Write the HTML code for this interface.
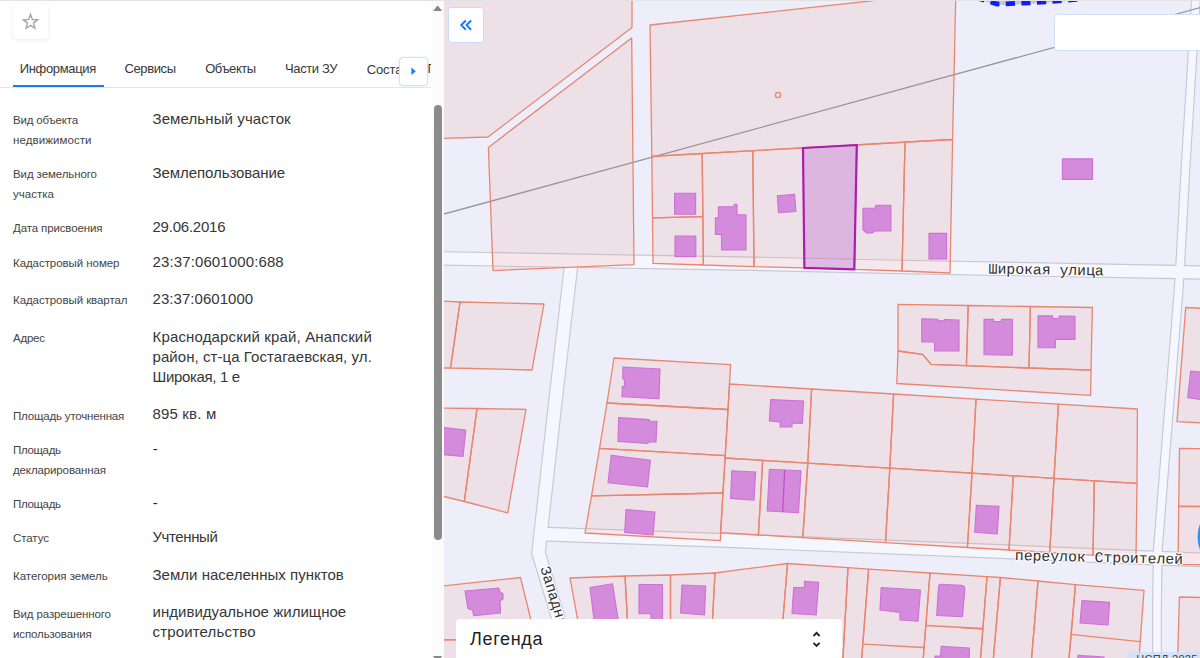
<!DOCTYPE html>
<html lang="ru"><head><meta charset="utf-8"><title>Карта</title>
<style>
html,body{margin:0;padding:0;}
body{width:1200px;height:658px;overflow:hidden;position:relative;background:#fff;font-family:"Liberation Sans",sans-serif;}
.t{position:absolute;white-space:pre;line-height:20px;}
.panel{position:absolute;left:0;top:0;width:431px;height:658px;background:#fff;overflow:hidden;}
.topline{position:absolute;left:0;top:0;width:1200px;height:1px;background:#e3e3e3;z-index:20;}
.star{position:absolute;left:13px;top:4px;width:35px;height:35px;border-radius:4px;background:#fff;box-shadow:0 1px 5px rgba(0,0,0,0.09);}
.tabline{position:absolute;left:0;top:87px;width:431px;height:1px;background:#e6e6e6;}
.tabact{position:absolute;left:13px;top:85px;width:90.5px;height:2px;background:#1a7cf0;}
.more{position:absolute;left:399px;top:57px;width:26.8px;height:26.8px;border:1px solid #cfe2fa;border-radius:4px;background:#fff;box-shadow:0 0 3px rgba(120,170,240,0.25);}
.sb{position:absolute;left:431px;top:0;width:13px;height:658px;background:#fbfbfb;}
.thumb{position:absolute;left:3px;top:105px;width:7.5px;height:435px;border-radius:4px;background:#8c8c8c;}
.map{position:absolute;left:444px;top:0;}
.btn{position:absolute;left:448.2px;top:7.1px;width:33.6px;height:33.6px;border:1px solid #c4dcfa;border-radius:3.5px;background:#fff;}
.search{position:absolute;left:1054.4px;top:14.1px;width:160px;height:34.8px;border:1px solid #cfe2fa;border-radius:4px;background:#fff;}
.legend{position:absolute;left:455.5px;top:619px;width:386px;height:50px;border-radius:4px 4px 0 0;background:#fff;}
.attr{position:absolute;left:1127px;top:652px;width:80px;height:10px;background:rgba(205,225,250,0.8);color:#444;font-size:11px;line-height:15px;letter-spacing:0.3px;white-space:pre;overflow:hidden;}
</style></head><body>
<div class="panel">
<div class="star"><svg width="35" height="35" viewBox="0 0 35 35"><path transform="translate(17.5,17.4) scale(0.9) translate(-17.5,-17.2)" d="M17.5,9.6 L19.6,15.1 L25.4,15.4 L20.9,19.1 L22.4,24.8 L17.5,21.6 L12.6,24.8 L14.1,19.1 L9.6,15.4 L15.4,15.1 Z" fill="none" stroke="#a6a6a6" stroke-width="1.55" stroke-linejoin="miter"/></svg></div>
<div class="tabline"></div><div class="tabact"></div>
<div class='t' style='left:19.70px;top:58.90px;font-size:13px;color:#383838;font-weight:400;letter-spacing:-0.333px'>Информация</div>
<div class='t' style='left:124.50px;top:58.90px;font-size:13px;color:#383838;font-weight:400;letter-spacing:-0.396px'>Сервисы</div>
<div class='t' style='left:205.20px;top:58.90px;font-size:13px;color:#383838;font-weight:400;letter-spacing:-0.438px'>Объекты</div>
<div class='t' style='left:285.10px;top:58.90px;font-size:13px;color:#383838;font-weight:400;letter-spacing:-0.398px'>Части ЗУ</div>
<div class='t' style='left:13.00px;top:110.32px;font-size:11.5px;color:#444444;font-weight:400;letter-spacing:-0.169px'>Вид объекта</div>
<div class='t' style='left:13.00px;top:130.32px;font-size:11.5px;color:#444444;font-weight:400;letter-spacing:0.081px'>недвижимости</div>
<div class='t' style='left:152.50px;top:109.00px;font-size:15px;color:#363636;font-weight:400;letter-spacing:0.105px'>Земельный участок</div>
<div class='t' style='left:13.00px;top:164.32px;font-size:11.5px;color:#444444;font-weight:400;letter-spacing:-0.096px'>Вид земельного</div>
<div class='t' style='left:13.00px;top:184.32px;font-size:11.5px;color:#444444;font-weight:400;letter-spacing:0.026px'>участка</div>
<div class='t' style='left:152.50px;top:163.00px;font-size:15px;color:#363636;font-weight:400;letter-spacing:-0.068px'>Землепользование</div>
<div class='t' style='left:13.00px;top:218.42px;font-size:11.5px;color:#444444;font-weight:400;letter-spacing:-0.124px'>Дата присвоения</div>
<div class='t' style='left:152.50px;top:216.90px;font-size:15px;color:#363636;font-weight:400;letter-spacing:-0.231px'>29.06.2016</div>
<div class='t' style='left:13.00px;top:253.02px;font-size:11.5px;color:#444444;font-weight:400;letter-spacing:-0.060px'>Кадастровый номер</div>
<div class='t' style='left:152.50px;top:251.50px;font-size:15px;color:#363636;font-weight:400;letter-spacing:0.119px'>23:37:0601000:688</div>
<div class='t' style='left:13.00px;top:290.42px;font-size:11.5px;color:#444444;font-weight:400;letter-spacing:-0.073px'>Кадастровый квартал</div>
<div class='t' style='left:152.50px;top:289.00px;font-size:15px;color:#363636;font-weight:400;letter-spacing:0.049px'>23:37:0601000</div>
<div class='t' style='left:13.00px;top:328.32px;font-size:11.5px;color:#444444;font-weight:400;letter-spacing:-0.234px'>Адрес</div>
<div class='t' style='left:152.50px;top:326.60px;font-size:15px;color:#363636;font-weight:400;letter-spacing:0.152px'>Краснодарский край, Анапский</div>
<div class='t' style='left:152.50px;top:346.60px;font-size:15px;color:#363636;font-weight:400;letter-spacing:0.063px'>район, ст-ца Гостагаевская, ул.</div>
<div class='t' style='left:152.50px;top:366.60px;font-size:15px;color:#363636;font-weight:400;letter-spacing:-0.333px'>Широкая, 1 е</div>
<div class='t' style='left:13.00px;top:406.02px;font-size:11.5px;color:#444444;font-weight:400;letter-spacing:-0.180px'>Площадь уточненная</div>
<div class='t' style='left:152.50px;top:404.20px;font-size:15px;color:#363636;font-weight:400;letter-spacing:0.166px'>895 кв. м</div>
<div class='t' style='left:13.00px;top:440.12px;font-size:11.5px;color:#444444;font-weight:400;letter-spacing:-0.344px'>Площадь</div>
<div class='t' style='left:13.00px;top:460.12px;font-size:11.5px;color:#444444;font-weight:400;letter-spacing:-0.121px'>декларированная</div>
<div class='t' style='left:13.00px;top:494.32px;font-size:11.5px;color:#444444;font-weight:400;letter-spacing:-0.344px'>Площадь</div>
<div class='t' style='left:13.00px;top:528.32px;font-size:11.5px;color:#444444;font-weight:400;letter-spacing:-0.072px'>Статус</div>
<div class='t' style='left:152.50px;top:526.60px;font-size:15px;color:#363636;font-weight:400;letter-spacing:-0.404px'>Учтенный</div>
<div class='t' style='left:13.00px;top:566.02px;font-size:11.5px;color:#444444;font-weight:400;letter-spacing:-0.028px'>Категория земель</div>
<div class='t' style='left:152.50px;top:564.60px;font-size:15px;color:#363636;font-weight:400;letter-spacing:0.024px'>Земли населенных пунктов</div>
<div class='t' style='left:13.00px;top:603.82px;font-size:11.5px;color:#444444;font-weight:400;letter-spacing:-0.120px'>Вид разрешенного</div>
<div class='t' style='left:13.00px;top:623.82px;font-size:11.5px;color:#444444;font-weight:400;letter-spacing:-0.123px'>использования</div>
<div class='t' style='left:152.50px;top:602.20px;font-size:15px;color:#363636;font-weight:400;letter-spacing:0.026px'>индивидуальное жилищное</div>
<div class='t' style='left:152.50px;top:622.20px;font-size:15px;color:#363636;font-weight:400;letter-spacing:0.161px'>строительство</div>
<div class="t" style="left:366.7px;top:59.5px;font-size:13px;color:#383838;letter-spacing:-0.1px;width:64px;overflow:hidden">Состав Г</div>
<div class="t" style="left:152.7px;top:439px;font-size:15px;color:#2b2b2b">-</div>
<div class="t" style="left:152.7px;top:493px;font-size:15px;color:#2b2b2b">-</div>
<div class="t" style="left:427.6px;top:59.3px;font-size:13px;color:#383838;width:3.4px;overflow:hidden">П</div>
<div class="more"><svg width="27" height="27" viewBox="-0.4 -0.3 27 27" style="position:absolute;left:0;top:0"><path d="M11,9.2 L15.4,13 L11,16.8 Z" fill="#1a7cf0"/></svg></div>
</div>
<div class="sb"><svg width="13" height="658" style="position:absolute;left:0;top:0"><path d="M2,11 L6.6,5.5 L11.2,11 Z" fill="#858585"/><path d="M2,656 L11.2,656 L6.6,661.5 Z" fill="#858585"/></svg><div class="thumb"></div></div>
<svg class="map" width="756" height="658" viewBox="444 0 756 658">
<rect x="440" y="-5" width="770" height="670" fill="#eeeefa"/>
<polyline points="440.0,258.4 740.0,263.5 900.0,266.9 1175.0,272.0 1205.0,272.6" fill="none" stroke="#c8c8d2" stroke-width="14.5" stroke-linejoin="round"/>
<polyline points="571.5,262.0 555.0,405.0 541.0,530.0 538.5,553.0 558.5,618.7 572.0,663.0" fill="none" stroke="#c8c8d2" stroke-width="14.6" stroke-linejoin="round"/>
<polyline points="541.0,534.0 740.0,541.0 1000.0,551.5 1153.0,558.0 1205.0,560.0" fill="none" stroke="#c8c8d2" stroke-width="14.8" stroke-linejoin="round"/>
<polyline points="1196.2,-5.0 1185.7,165.0 1180.2,265.0 1178.6,290.0 1165.3,455.0 1157.8,550.0 1157.0,605.0 1157.0,665.0" fill="none" stroke="#c8c8d2" stroke-width="9.9" stroke-linejoin="round"/>
<polyline points="440.0,258.4 740.0,263.5 900.0,266.9 1175.0,272.0 1205.0,272.6" fill="none" stroke="#f6f6fe" stroke-width="12.2" stroke-linejoin="round"/>
<polyline points="571.5,262.0 555.0,405.0 541.0,530.0 538.5,553.0 558.5,618.7 572.0,663.0" fill="none" stroke="#f6f6fe" stroke-width="12.3" stroke-linejoin="round"/>
<polyline points="541.0,534.0 740.0,541.0 1000.0,551.5 1153.0,558.0 1205.0,560.0" fill="none" stroke="#f6f6fe" stroke-width="12.5" stroke-linejoin="round"/>
<polyline points="1196.2,-5.0 1185.7,165.0 1180.2,265.0 1178.6,290.0 1165.3,455.0 1157.8,550.0 1157.0,605.0 1157.0,665.0" fill="none" stroke="#f6f6fe" stroke-width="7.6" stroke-linejoin="round"/>
<line x1="440" y1="215.1" x2="1205" y2="6.2" stroke="#96969e" stroke-width="1.3"/>
<path d="M972,-5 L997,2.5 Q1040,1.7 1096,-4" fill="none" stroke="#c6c6cc" stroke-width="5"/>
<path d="M972,-3.5 L997,4 Q1040,3.2 1096,-2.5" fill="none" stroke="#0f1cff" stroke-width="4.8" stroke-dasharray="9.2 6.4" stroke-dashoffset="11.8"/>
<g fill="rgba(242,128,100,0.125)" stroke="#e98670" stroke-width="1.3" stroke-linejoin="round">
<polygon points="440.0,-5.0 632.0,-5.0 632.0,27.6 488.0,137.0 440.0,138.5"/>
<polygon points="631.7,38.0 488.4,147.4 493.0,270.6 634.0,264.6"/>
<polygon points="650.0,25.0 893.0,-1.5 955.7,-1.5 952.6,139.5 651.8,156.3"/>
<polygon points="651.8,156.3 702.2,153.5 702.8,216.7 652.5,217.8"/>
<polygon points="652.5,217.8 702.8,216.7 703.4,265.0 653.0,263.4"/>
<polygon points="702.2,153.5 752.8,150.7 754.0,266.7 703.4,265.0"/>
<polygon points="752.8,150.7 803.0,148.0 804.4,267.9 754.0,266.7"/>
<polygon points="856.8,145.0 905.0,142.2 902.0,271.0 854.3,269.4"/>
<polygon points="905.0,142.2 952.6,139.5 950.0,273.0 902.0,271.0"/>
<polygon points="440.0,301.0 460.0,302.0 450.5,368.0 440.0,368.0"/>
<polygon points="460.0,302.0 544.0,304.0 532.0,370.0 450.5,368.0"/>
<polygon points="440.0,408.0 477.0,408.5 464.3,501.5 440.0,495.5"/>
<polygon points="477.0,408.5 526.0,409.3 507.7,512.8 464.3,501.5"/>
<polygon points="614.0,358.0 730.6,364.7 728.0,409.5 607.0,403.0"/>
<polygon points="607.0,403.0 728.0,409.5 725.3,455.7 599.5,448.4"/>
<polygon points="599.5,448.4 725.3,455.7 723.0,493.0 591.5,495.8"/>
<polygon points="591.5,495.8 723.0,493.0 720.3,540.6 585.0,533.0"/>
<polygon points="729.6,384.0 811.6,389.0 807.8,463.1 725.0,458.0"/>
<polygon points="811.6,389.0 893.6,394.0 889.8,468.2 807.8,463.1"/>
<polygon points="893.6,394.0 976.0,399.1 972.0,473.2 889.8,468.2"/>
<polygon points="976.0,399.1 1058.4,404.2 1054.0,478.3 972.0,473.2"/>
<polygon points="1058.4,404.2 1137.4,409.0 1137.0,483.4 1054.0,478.3"/>
<polygon points="725.0,458.0 762.7,460.3 758.4,535.0 720.5,532.7"/>
<polygon points="762.7,460.3 807.8,463.1 802.8,537.6 758.4,535.0"/>
<polygon points="807.8,463.1 889.8,468.2 885.5,542.6 802.8,537.6"/>
<polygon points="889.8,468.2 972.0,473.2 967.4,547.5 885.5,542.6"/>
<polygon points="972.0,473.2 1013.3,475.8 1009.0,550.0 967.4,547.5"/>
<polygon points="1013.3,475.8 1054.0,478.3 1049.7,552.5 1009.0,550.0"/>
<polygon points="1054.0,478.3 1094.3,480.8 1093.0,555.1 1049.7,552.5"/>
<polygon points="1094.3,480.8 1137.0,483.4 1136.0,557.7 1093.0,555.1"/>
<polygon points="898.0,304.3 968.2,305.5 966.4,365.6 931.0,364.4 922.6,354.4 898.0,351.0"/>
<polygon points="968.2,305.5 1030.4,306.5 1029.0,368.0 966.4,365.6"/>
<polygon points="1030.4,306.5 1092.4,307.5 1091.0,370.2 1029.0,368.0"/>
<polygon points="898.0,351.0 922.6,354.4 931.0,364.4 1091.0,370.2 1090.6,395.3 896.8,383.5"/>
<polygon points="1185.7,307.5 1205.0,308.5 1205.0,423.0 1177.0,421.6"/>
<polygon points="1179.5,448.3 1205.0,448.6 1205.0,506.5 1178.7,506.4"/>
<polygon points="1178.7,506.4 1205.0,506.5 1205.0,564.8 1178.0,564.4"/>
<polygon points="1179.4,597.0 1205.0,597.6 1205.0,665.0 1177.4,665.0"/>
<polygon points="440.0,586.4 520.5,577.5 535.6,639.0 440.0,640.0"/>
<polygon points="440.0,640.0 535.6,639.0 541.7,665.0 440.0,665.0"/>
<polygon points="570.0,578.0 625.0,576.0 630.0,665.0 586.0,665.0"/>
<polygon points="625.0,576.0 670.5,575.0 670.5,665.0 630.0,665.0"/>
<polygon points="670.5,575.0 715.0,573.0 710.0,665.0 670.5,665.0"/>
<polygon points="715.0,573.0 740.0,569.7 787.5,563.5 779.3,665.0 710.0,665.0"/>
<polygon points="787.5,563.5 848.0,567.6 842.6,665.0 779.3,665.0"/>
<polygon points="848.0,567.6 868.6,569.1 861.2,665.0 842.6,665.0"/>
<polygon points="868.6,569.1 930.0,573.0 922.7,665.0 861.2,665.0"/>
<polygon points="930.0,573.0 987.0,576.7 980.0,665.0 922.7,665.0"/>
<polygon points="987.0,576.7 1000.4,577.5 992.8,665.0 980.0,665.0"/>
<polygon points="1000.4,577.5 1038.0,581.0 1031.0,665.0 992.8,665.0"/>
<polygon points="1038.0,581.0 1075.5,584.6 1068.4,665.0 1031.0,665.0"/>
<polygon points="1075.5,584.6 1144.0,590.4 1138.5,665.0 1068.4,665.0"/>
<polyline points="863.7,644.2 923.7,647.5" fill="none"/>
<polyline points="926.2,625.5 982.5,628.5" fill="none"/>
<polyline points="1071.0,634.4 1140.0,641.6" fill="none"/>
<polyline points="960.0,627.6 982.0,629.0" fill="none"/>
<circle cx="778" cy="95" r="2.6" fill="none"/>
</g>
<polygon points="803.0,148.0 856.8,145.0 854.3,269.4 804.4,267.9" fill="rgba(193,97,180,0.40)" stroke="#a81eb0" stroke-width="2.2" stroke-linejoin="round"/>
<g fill="#d58bdb" stroke="#cc72d4" stroke-width="1.15" stroke-linejoin="round">
<polygon points="674.6,193.2 695.6,193.2 695.6,214.2 674.6,214.2"/>
<polygon points="675.0,236.0 695.8,236.0 695.8,256.6 675.0,256.6"/>
<polygon points="718.4,206.7 734.2,206.7 734.2,204.4 737.0,204.4 737.0,214.7 746.0,214.7 746.0,249.8 721.5,249.8 721.5,234.3 715.4,234.3 715.4,217.7 718.4,217.7"/>
<polygon points="777.3,195.7 794.6,194.4 795.9,211.5 778.6,212.7"/>
<polygon points="863.0,208.2 875.6,208.2 875.6,205.2 890.9,205.2 890.9,230.8 875.0,230.8 872.0,233.0 866.8,233.0 863.0,229.8"/>
<polygon points="929.0,233.3 946.6,233.3 946.6,258.9 929.0,258.9"/>
<polygon points="1062.4,158.8 1092.5,158.8 1092.5,179.4 1062.4,179.4"/>
<polygon points="623.0,367.0 660.0,369.0 659.0,398.7 622.0,396.7 622.3,386.6 624.3,386.6 624.5,379.0 622.7,379.0"/>
<polygon points="618.7,417.6 649.3,419.6 649.3,421.0 657.0,421.3 656.0,442.0 648.0,442.0 648.0,443.5 618.0,441.4"/>
<polygon points="611.2,455.2 650.5,460.2 647.5,487.0 608.0,482.7"/>
<polygon points="626.0,509.5 655.0,512.0 653.0,535.0 624.7,532.4"/>
<polygon points="440.0,427.2 465.8,430.0 463.0,456.4 440.0,454.3"/>
<polygon points="770.7,399.6 803.6,401.0 802.3,423.4 792.0,423.0 792.0,427.0 780.2,427.0 780.2,422.0 769.4,420.9"/>
<polygon points="731.8,470.8 755.6,472.0 754.0,500.2 730.6,498.4"/>
<polygon points="769.4,469.3 801.0,470.8 798.5,512.7 767.2,511.0"/>
<polygon points="976.4,505.2 999.0,506.4 997.2,534.0 974.7,532.2"/>
<polygon points="921.8,318.8 938.0,319.2 938.0,320.8 944.4,320.8 944.4,319.5 959.0,320.0 959.0,351.0 934.6,351.0 934.6,342.0 921.8,342.0"/>
<polygon points="984.0,319.3 993.5,319.3 993.5,321.5 1001.5,321.5 1001.5,319.3 1012.3,319.3 1012.3,355.2 984.0,354.8"/>
<polygon points="1038.0,315.8 1052.5,315.8 1052.5,318.5 1059.2,318.5 1059.2,316.0 1075.0,316.3 1075.0,339.4 1055.4,339.4 1055.4,347.7 1038.0,347.7"/>
<polygon points="1190.7,371.0 1205.0,372.5 1205.0,400.0 1187.7,397.8"/>
<polygon points="465.0,591.0 498.7,588.0 500.0,592.0 503.0,593.7 503.0,598.7 500.0,601.0 500.5,613.0 473.7,615.7 472.5,610.0 468.0,608.7"/>
<polygon points="590.0,587.5 612.5,583.7 619.0,625.0 594.7,625.0"/>
<polygon points="639.0,584.5 662.5,584.5 662.5,625.0 651.0,625.0 651.0,613.7 639.0,613.7"/>
<polygon points="682.0,585.0 705.7,586.0 704.5,615.0 680.5,613.0"/>
<polygon points="793.7,587.5 804.5,587.5 804.5,581.2 818.7,582.2 816.2,615.0 792.0,613.5"/>
<polygon points="881.2,587.5 920.5,590.0 918.0,621.2 900.0,620.0 900.0,612.5 880.0,610.0"/>
<polygon points="941.2,646.2 969.5,648.0 969.0,665.0 935.0,665.0 935.0,656.0 940.6,656.0"/>
<polygon points="1082.0,600.6 1109.6,602.4 1108.0,625.0 1080.0,623.0"/>
<polygon points="1078.0,655.4 1104.0,657.0 1104.0,665.0 1077.5,665.0"/>
<path d="M941.5,584.3 L961,585.4 Q965,585.7 964.8,589.5 L962.5,616.7 L936.7,615.5 L938.5,587 Q938.7,584.2 941.5,584.3 Z"/>
<line x1="784.7" y1="470" x2="782.7" y2="512" stroke="#c050cc" stroke-width="1.3"/>
</g>
<circle cx="1232.6" cy="537" r="33.5" fill="#fff" stroke="#2196f3" stroke-width="3"/>
<text font-family="Liberation Mono" font-size="14.75" fill="#2e2e2e" stroke="#ffffff" stroke-opacity="0.8" stroke-width="2.6" stroke-linejoin="round" paint-order="stroke" transform="translate(988.6,273.4) rotate(1.0)">Широкая улица</text>
<text font-family="Liberation Mono" font-size="14.75" fill="#2e2e2e" stroke="#ffffff" stroke-opacity="0.8" stroke-width="2.6" stroke-linejoin="round" paint-order="stroke" transform="translate(1014.8,560.0) rotate(1.35)">переулок Строителей</text>
<text font-family="Liberation Mono" font-size="14.75" fill="#2e2e2e" stroke="#ffffff" stroke-opacity="0.8" stroke-width="2.6" stroke-linejoin="round" paint-order="stroke" transform="translate(540.2,568.0) rotate(72.8)">Западная улица</text>
</svg>
<div class="btn"><svg width="34" height="34" viewBox="0 0 34 34" style="position:absolute;left:0;top:0"><path d="M16.8,12.5 L12.3,17.1 L16.8,21.7 M22.1,12.5 L17.6,17.1 L22.1,21.7" fill="none" stroke="#1a7cf0" stroke-width="2"/></svg></div>
<div class="search"></div>
<div class="legend"><svg width="386" height="40" style="position:absolute;left:0;top:0"><path d="M357.5,17.0 L360.55,13.8 L363.6,17.0 M357.5,23.8 L360.55,27.0 L363.6,23.8" fill="none" stroke="#222" stroke-width="1.85"/></svg></div>
<div class='t' style='left:470.10px;top:628.76px;font-size:18px;color:#222;font-weight:400;letter-spacing:0.655px'>Легенда</div>
<div class="attr">&nbsp;&nbsp;&thinsp;НСПД 2025 ©</div>
<div class="topline"></div>
</body></html>
